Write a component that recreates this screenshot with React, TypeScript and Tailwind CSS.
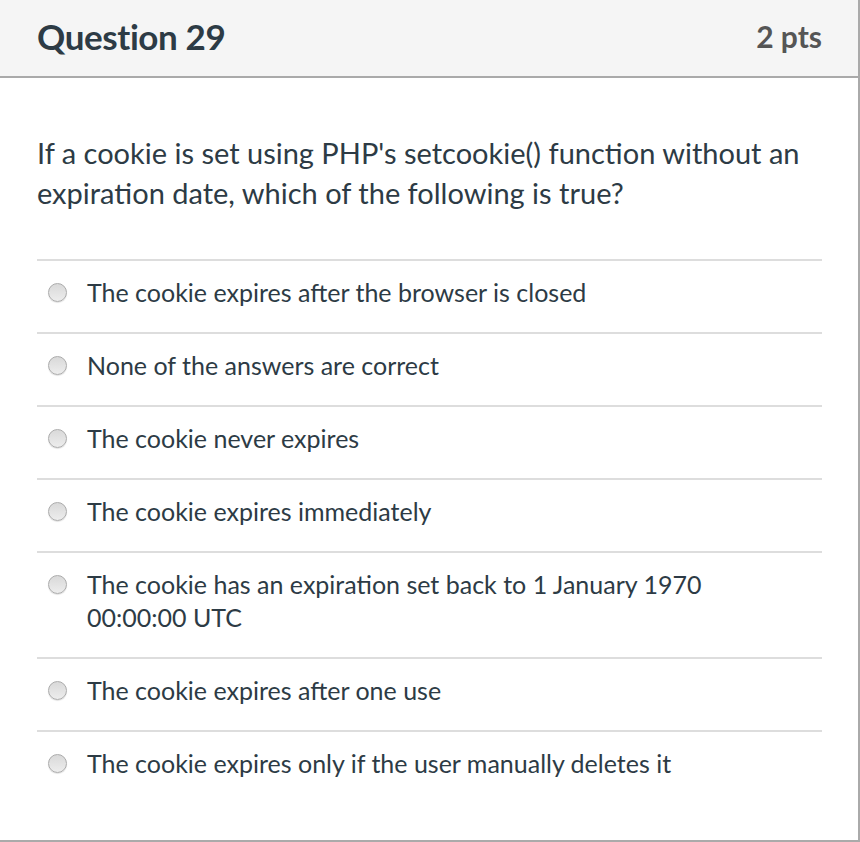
const answers = [
  "The cookie expires after the browser is closed",
  "None of the answers are correct",
  "The cookie never expires",
  "The cookie expires immediately",
  "The cookie has an expiration set back to 1 January 1970 00:00:00 UTC",
  "The cookie expires after one use",
  "The cookie expires only if the user manually deletes it",
];

function Radio() {
  return (
    <span className="mt-[7px] block h-[19px] w-[19px] shrink-0 rounded-full border border-[#ababab] bg-gradient-to-b from-[#d9d9d9] to-[#ededed] shadow-[0_1px_1px_rgba(0,0,0,0.12)]" />
  );
}

export default function App() {
  return (
    <div
      className="h-[842px] w-[860px] bg-white text-[#2d3b45]"
      style={{ fontFamily: "Lato, 'Open Sans', sans-serif" }}
    >
      <div className="flex h-[842px] w-[860px] flex-col border-r-2 border-b-2 border-[#aaaaaa]">
        <div className="flex h-[78px] shrink-0 items-center justify-between border-b-2 border-[#aaaaaa] bg-[#f5f5f5] pb-[3px] pl-[37px] pr-[36px]">
          <h2 className="text-[35px] font-bold tracking-[-0.4px]">Question 29</h2>
          <span className="text-[30px] font-bold text-[#555555]">2 pts</span>
        </div>

        <div className="pl-[37px] pr-[36px]">
          <p className="pt-[55px] pb-[46px] text-[29px] leading-[40px]">
            If a cookie is set using PHP's setcookie() function without an
            expiration date, which of the following is true?
          </p>

          <ul>
            {answers.map((a) => (
              <li
                key={a}
                className="flex gap-[20px] border-t-2 border-[#dddddd] pt-[15px] pb-[23px] pl-[11px] pr-[100px] text-[25px] leading-[33px]"
              >
                <Radio />
                <span>{a}</span>
              </li>
            ))}
          </ul>
        </div>
      </div>
    </div>
  );
}
